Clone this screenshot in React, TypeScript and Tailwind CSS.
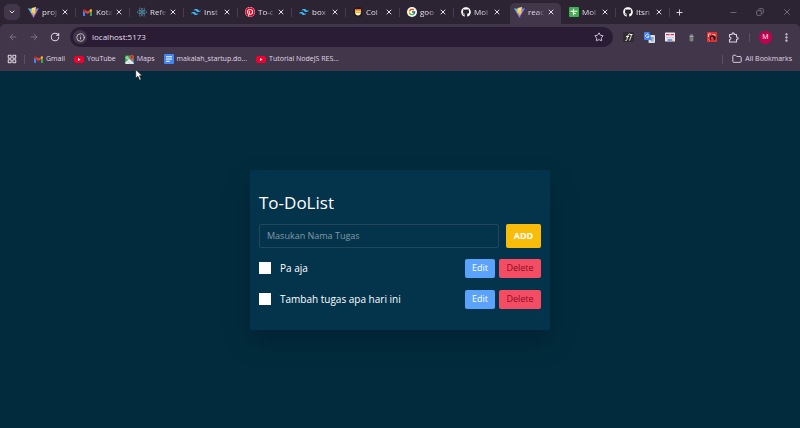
import React from "react";
import { FaGithub, FaPinterest, FaReact } from "react-icons/fa";
import { FcGoogle } from "react-icons/fc";
import { SiTailwindcss } from "react-icons/si";
import {
  ArrowLeft,
  ArrowRight,
  ChevronDown,
  Copy,
  EllipsisVertical,
  Folder,
  Info,
  LayoutGrid,
  Minus,
  Plus,
  RotateCw,
  Star,
  X,
} from "lucide-react";

function ViteIcon() {
  return (
    <svg viewBox="0 0 24 24" className="size-[11px] shrink-0">
      <defs>
        <linearGradient id="viteBody" x1="0" y1="0" x2="1" y2="1">
          <stop offset="0" stopColor="#41d1ff" />
          <stop offset="1" stopColor="#bd34fe" />
        </linearGradient>
        <linearGradient id="viteBolt" x1="0" y1="0" x2="0" y2="1">
          <stop offset="0" stopColor="#ffea83" />
          <stop offset="1" stopColor="#ffa800" />
        </linearGradient>
      </defs>
      <path d="M1 3.500 12 5.500 23 3.500 12 23Z" fill="url(#viteBody)" stroke="url(#viteBody)" strokeLinejoin="round" />
      <path d="M18 0 8 2 7 13l3.500-.6-1 4.100 2.700-.7L11 22l7-12.500-3.400.6L16 6Z" fill="url(#viteBolt)" />
    </svg>
  );
}

function GmailIcon() {
  return (
    <svg viewBox="0 0 24 18" className="h-[7px] w-[9px] shrink-0">
      <path d="M0 3v13.500C0 17.500.7 18 1.600 18H5.500V7Z" fill="#4285f4" />
      <path d="M24 3v13.500c0 1-.7 1.500-1.600 1.500h-3.900V7Z" fill="#34a853" />
      <path d="M5.500 1.500v7L12 13.300l6.500-4.800v-7L12 6.500Z" fill="#ea4335" />
      <path d="M0 2.500v2L5.500 8.600V1.500L4.200.6C2.400-.7 0 .5 0 2.500Z" fill="#c5221f" />
      <path d="M24 2.500v2l-5.500 4.100V1.500l1.300-.9C21.600-.7 24 .5 24 2.500Z" fill="#fbbc04" />
    </svg>
  );
}

function YouTubeIcon() {
  return (
    <svg viewBox="0 0 20 14" className="h-[7px] w-[10px] shrink-0">
      <rect width="20" height="14" rx="4" fill="#f0002c" />
      <path d="m8 4 5 3-5 3Z" fill="#fff" />
    </svg>
  );
}

function MapsIcon() {
  return (
    <svg viewBox="0 0 20 20" className="size-[9px] shrink-0">
      <rect y="1" width="19" height="19" rx="2" fill="#34a853" />
      <path d="M0 17 5 12l6 8H2Z" fill="#e8eaed" />
      <path d="m5 12 4-4 11 10-1 2h-8Z" fill="#dfe6ee" />
      <path d="m13 10 6 6v-7l-2-2Z" fill="#4a8af4" />
      <path d="M15 0a4.500 4.500 0 0 0-4.500 4.500C10.500 8 15 12 15 12s4.500-4 4.500-7.500A4.500 4.500 0 0 0 15 0Z" fill="#ea4335" />
      <circle cx="15" cy="4.500" r="1.500" fill="#8c1b12" />
      <path d="M7 4.500A2.500 2.500 0 1 0 7.500 6H5" fill="none" stroke="#fff" strokeWidth="1.300" />
    </svg>
  );
}

function DocsIcon() {
  return (
    <svg viewBox="0 0 20 20" className="size-[10px] shrink-0">
      <rect width="20" height="20" rx="2" fill="#4285f4" />
      <path d="M4 5.500h12M4 10h12M4 14.500h8" stroke="#fff" strokeWidth="2.200" />
    </svg>
  );
}

function ColorHuntIcon() {
  return (
    <svg viewBox="0 0 20 20" className="size-[10px] shrink-0">
      <rect x="2" width="16" height="20" rx="3" fill="#241c22" />
      <path d="M4 4h12v4H4Z" fill="#f0643c" />
      <path d="M4 7h12v4H4Z" fill="#ffd23f" />
      <path d="M4 11h12c0 4-3 6-6 6s-6-2-6-6Z" fill="#fff1b0" />
    </svg>
  );
}

function SheetsIcon() {
  return (
    <svg viewBox="0 0 20 20" className="size-[10px] shrink-0">
      <rect width="20" height="20" rx="2" fill="#3fae4c" />
      <path d="M3 8.500h14M9 3.500v13M9 13h5" stroke="#fff" strokeWidth="2.400" />
    </svg>
  );
}

function FontExtIcon() {
  return (
    <svg viewBox="0 0 22 20" className="h-[10px] w-[11px]">
      <rect width="22" height="20" rx="3" fill="#302c30" />
      <path d="M5 17c3 1 3-3 4-7s2-7 5-6M6 9h6M13 17c1-2 2-5 3-8M14 5h5M17 5l-1 4" fill="none" stroke="#f4f4e8" strokeWidth="2" />
    </svg>
  );
}

function TranslateIcon() {
  return (
    <svg viewBox="0 0 22 22" className="size-[11px]">
      <rect x="9" y="6" width="13" height="16" rx="1.500" fill="#d8dde6" />
      <path d="M12 12h8M16 10v2m3 0c-1 3-3 5-5 6m-1-4c1 2 3 4 6 4" stroke="#6b7f9e" fill="none" strokeWidth="1.300" />
      <path d="M1.500 0h9l5 16H1.500C.7 16 0 15.300 0 14.500v-13C0 .7.700 0 1.500 0Z" fill="#4285f4" />
      <path d="M9.500 6A3.400 3.400 0 1 0 10 8.500H7" fill="none" stroke="#fff" strokeWidth="1.600" />
    </svg>
  );
}

function CalendarExtIcon() {
  return (
    <svg viewBox="0 0 20 20" className="size-[10px]">
      <rect y="1" width="20" height="18" rx="1" fill="#eceaf0" />
      <path d="M2 5h16" stroke="#e0354a" strokeWidth="2.500" strokeDasharray="7 2" />
      <path d="M2 11h16" stroke="#b9c2e2" strokeWidth="2" strokeDasharray="5 1" />
      <path d="M5 16h9" stroke="#3565d8" strokeWidth="2.500" />
      <path d="M14 16h3" stroke="#f0b435" strokeWidth="2.500" />
    </svg>
  );
}

function BugExtIcon() {
  return (
    <svg viewBox="0 0 10 18" className="h-[9px] w-[5px]">
      <path d="M3 2h4v3H3Z" fill="#77727c" />
      <rect x="1" y="5" width="8" height="4" rx="1" fill="#a5a9a2" />
      <rect x="1" y="9" width="8" height="8" rx="3" fill="#77827a" />
    </svg>
  );
}

function RedExtIcon() {
  return (
    <svg viewBox="0 0 20 20" className="size-[10px]">
      <rect width="20" height="20" rx="1" fill="#e03232" />
      <path d="M6 9c2-3 8-3 10 0 2 3 1 6-1 8l-2-4H9l-1 4H6Z" fill="#3d1218" />
      <path d="M3 4h5M3 4v6M11 5h5v3M3 15l2 2M8 12h4" stroke="#ffc9c2" strokeWidth="1.800" fill="none" />
    </svg>
  );
}

function ExtensionsIcon() {
  return (
    <svg viewBox="0 0 22 22" className="size-[11px]" fill="none" stroke="currentColor" strokeWidth="2.200" strokeLinejoin="round">
      <path d="M3 5h5V4a2 2 0 0 1 4.500 0v1H17v5h1a2.200 2.200 0 0 1 0 4.500h-1V20H3v-5c4 0 4-5 0-5Z" />
    </svg>
  );
}

function Cursor() {
  return (
    <svg viewBox="0 0 14 22" className="pointer-events-none absolute top-[69px] left-[135px] h-[12px] w-[8px]">
      <path d="M1 1v16l4-3.500L8 20.500l3-1.300-3-6.700h5Z" fill="#fff" stroke="#111" strokeWidth="1.200" />
    </svg>
  );
}

const github = <FaGithub className="size-[10px] shrink-0 text-white" />;
const tailwind = <SiTailwindcss className="size-[10px] shrink-0 text-[#38bdf8]" />;

const tabs: { title: string; icon: React.ReactNode; active?: boolean }[] = [
  { title: "proj", icon: <ViteIcon /> },
  { title: "Kota", icon: <GmailIcon /> },
  { title: "Refe", icon: <FaReact className="size-[10px] shrink-0 text-[#58a9bd]" /> },
  { title: "Inst", icon: tailwind },
  { title: "To-c", icon: <FaPinterest className="size-[10px] shrink-0 rounded-full bg-white text-[#e60023]" /> },
  { title: "box", icon: tailwind },
  { title: "Col", icon: <ColorHuntIcon /> },
  { title: "goo", icon: <FcGoogle className="size-[10px] shrink-0 rounded-full bg-white p-px" /> },
  { title: "Mol", icon: github },
  { title: "reac", icon: <ViteIcon />, active: true },
  { title: "Mol", icon: <SheetsIcon /> },
  { title: "Itsn", icon: github },
];

function TabStrip() {
  return (
    <div className="flex h-6 items-center bg-[#2d2433] pr-2 text-[#e3dce8]">
      <button aria-label="Search tabs" className="ml-1 flex size-4 shrink-0 items-center justify-center rounded-[5px] bg-[#41364a]">
        <ChevronDown size={8} strokeWidth={3} />
      </button>
      <div className="ml-[2px] flex self-stretch">
        {tabs.map((tab, i) => (
          <div key={i} className="flex w-[54px] items-center pt-[3px]">
            <div
              className={
                "ml-[2px] flex h-full flex-1 items-center rounded-t-[5px] pb-[3px] pl-[4px] " +
                (tab.active ? "bg-[#41364a]" : "")
              }
            >
              <span className="flex w-[11px] shrink-0 justify-center">{tab.icon}</span>
              <span className="ml-[3px] w-[17px] shrink-0 text-[8px] leading-3 whitespace-nowrap [mask-image:linear-gradient(to_right,black_50%,transparent)]">
                {tab.title}
              </span>
              <button aria-label="Close tab" className="ml-[2px] flex shrink-0">
                <X size={8} strokeWidth={3} />
              </button>
            </div>
            <span
              className={"mb-[3px] h-[9px] w-px shrink-0 " + (tab.active || tabs[i + 1]?.active ? "bg-transparent" : "bg-[#493e50]")}
            />
          </div>
        ))}
      </div>
      <button aria-label="New tab" className="ml-[5px] flex">
        <Plus size={9} strokeWidth={2.500} />
      </button>
      <div className="ml-auto flex items-center gap-[18px] text-[#81778a]">
        <button aria-label="Minimize">
          <Minus size={9} strokeWidth={2} />
        </button>
        <button aria-label="Restore">
          <Copy size={8} strokeWidth={2.500} className="-scale-x-100" />
        </button>
        <button aria-label="Close window">
          <X size={10} strokeWidth={2} />
        </button>
      </div>
    </div>
  );
}

function Toolbar() {
  return (
    <div className="flex h-[26px] items-center pr-2 text-[#dcd3e2]">
      <button aria-label="Back" className="ml-2 text-[#82778b]">
        <ArrowLeft size={10} strokeWidth={2.200} />
      </button>
      <button aria-label="Forward" className="ml-[11px] text-[#82778b]">
        <ArrowRight size={10} strokeWidth={2.200} />
      </button>
      <button aria-label="Reload" className="ml-[11px]">
        <RotateCw size={10} strokeWidth={2.500} />
      </button>
      <div className="ml-[10px] flex h-5 flex-1 items-center rounded-full bg-[#2a1c35] pr-[9px] pl-[3px]">
        <button aria-label="Site information" className="flex size-[14px] items-center justify-center rounded-full bg-[#41364a]">
          <Info size={9} strokeWidth={2.200} />
        </button>
        <input
          aria-label="Address"
          defaultValue="localhost:5173"
          className="ml-[5px] min-w-0 flex-1 bg-transparent text-[8px] leading-3 text-[#e6dfea] outline-none"
        />
        <button aria-label="Bookmark this tab">
          <Star size={10} strokeWidth={2.200} />
        </button>
      </div>
      <div className="ml-[10px] flex items-center">
        <button aria-label="Font finder" className="flex w-[21px] justify-start"><FontExtIcon /></button>
        <button aria-label="Translate" className="flex w-[21px] justify-start"><TranslateIcon /></button>
        <button aria-label="Calendar" className="flex w-[21px] justify-start"><CalendarExtIcon /></button>
        <button aria-label="Debugger" className="flex w-[21px] justify-start pl-[3px]"><BugExtIcon /></button>
        <button aria-label="Reader" className="flex w-[21px] justify-start"><RedExtIcon /></button>
        <button aria-label="Extensions" className="flex w-[21px] justify-start"><ExtensionsIcon /></button>
        <span className="h-[9px] w-px bg-[#5d5066]" />
        <button aria-label="Profile" className="ml-[9px] flex size-[13px] items-center justify-center rounded-full bg-[#c2004f] text-[7px] leading-3 text-white">
          M
        </button>
        <button aria-label="Menu" className="ml-[9px]">
          <EllipsisVertical size={11} strokeWidth={3} />
        </button>
      </div>
    </div>
  );
}

function Bookmark({ icon, children }: { icon: React.ReactNode; children: React.ReactNode }) {
  return (
    <a href="#" className="flex items-center gap-[3px] whitespace-nowrap">
      {icon}
      {children}
    </a>
  );
}

function BookmarksBar() {
  return (
    <nav className="flex h-[21px] items-center pr-2 pb-[3px] pl-[7px] text-[7px] leading-3 text-[#e0d8e6]">
      <button aria-label="Apps">
        <LayoutGrid size={10} strokeWidth={2.500} />
      </button>
      <span className="mr-[9px] ml-[7px] h-[9px] w-px bg-[#5d5066]" />
      <div className="flex gap-[9px]">
        <Bookmark icon={<GmailIcon />}>Gmail</Bookmark>
        <Bookmark icon={<YouTubeIcon />}>YouTube</Bookmark>
        <Bookmark icon={<MapsIcon />}>Maps</Bookmark>
        <Bookmark icon={<DocsIcon />}>makalah_startup.do...</Bookmark>
        <Bookmark icon={<YouTubeIcon />}>Tutorial NodeJS RES...</Bookmark>
      </div>
      <span className="mr-[9px] ml-auto h-[9px] w-px bg-[#5d5066]" />
      <Bookmark icon={<Folder size={10} strokeWidth={2.200} />}>All Bookmarks</Bookmark>
    </nav>
  );
}

function Task({ id, name }: { id: string; name: string }) {
  return (
    <li className="flex h-[31px] items-center">
      <input id={id} type="checkbox" className="size-3 appearance-none bg-white checked:bg-[#5ba4fb]" />
      <label htmlFor={id} className="ml-[9px] flex-1 text-[10px] leading-4 text-white">
        {name}
      </label>
      <button className="h-[19px] w-[30px] rounded-[2px] bg-[#5ba3fa] text-[9px] leading-4 text-white">Edit</button>
      <button className="ml-1 h-[19px] w-[42px] rounded-[2px] bg-[#f44d63] text-[9px] leading-4 text-[#8f0a24]">Delete</button>
    </li>
  );
}

export default function App() {
  return (
    <div className="relative flex min-h-screen flex-col bg-[#022c3d] font-['Open_Sans','Noto_Sans',sans-serif]">
      <header className="bg-[#2d2433]">
        <TabStrip />
        <div className="rounded-t-[5px] bg-[#41364a]">
          <Toolbar />
          <BookmarksBar />
        </div>
      </header>
      <Cursor />
      <main className="flex flex-1 items-center justify-center">
        <section className="w-[300px] rounded-[2px] bg-[#04344c] px-[9px] pt-[19px] pb-[15px] shadow-[0_12px_24px_rgba(0,20,40,0.4)]">
          <h1 className="text-[17px] leading-7 text-white">To-DoList</h1>
          <form className="mt-[7px] flex gap-[7px]" onSubmit={(e) => e.preventDefault()}>
            <input
              aria-label="Masukan Nama Tugas"
              placeholder="Masukan Nama Tugas"
              className="h-6 min-w-0 flex-1 rounded-[2px] border border-[#24455a] bg-transparent px-[7px] text-[9px] leading-4 text-white outline-none placeholder:text-[#8398a4]"
            />
            <button className="h-6 w-[35px] rounded-[2px] bg-[#f8bd0b] text-[9px] leading-4 font-bold text-white">ADD</button>
          </form>
          <ul className="mt-[5px]">
            <Task id="task-1" name="Pa aja" />
            <Task id="task-2" name="Tambah tugas apa hari ini" />
          </ul>
        </section>
      </main>
    </div>
  );
}
